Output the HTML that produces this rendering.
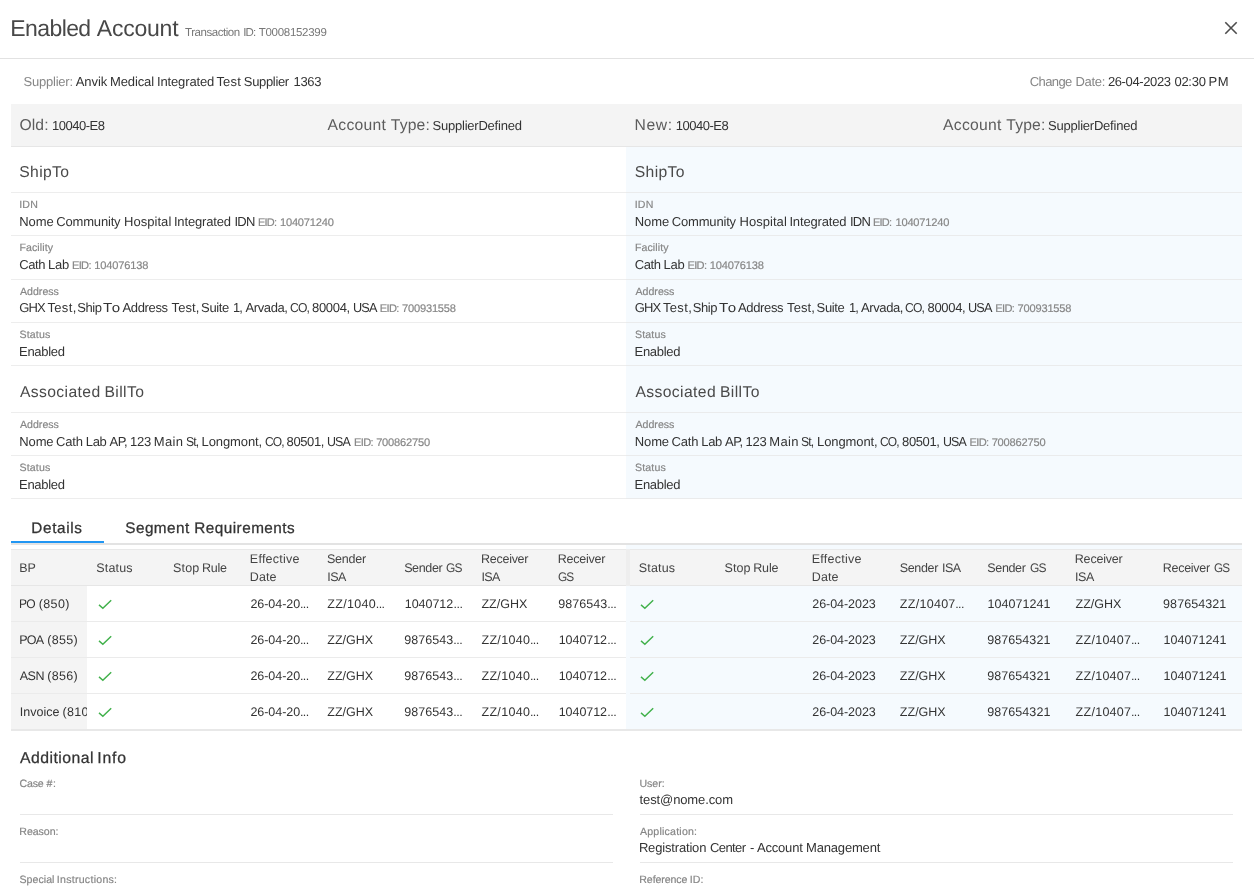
<!DOCTYPE html>
<html><head><meta charset="utf-8"><title>Enabled Account</title>
<style>
*{margin:0;padding:0;box-sizing:border-box}
html,body{width:1254px;height:890px;overflow:hidden;background:#fff}
body{font-family:"Liberation Sans",sans-serif;font-size:13px;color:#333;position:relative;text-rendering:geometricPrecision}
.a{position:absolute;white-space:nowrap;line-height:20px;height:20px}
.b{position:absolute}
#w{position:absolute;left:0;top:0;width:1254px;height:890px;will-change:transform}
</style></head>
<body>
<div id="w">
<div class="a" style="left:10.31px;top:18px;font-size:23px;color:#484848;letter-spacing:-0.59px;">Enabled</div>
<div class="a" style="left:96.83px;top:18px;font-size:23px;color:#484848;letter-spacing:-0.23px;">Account</div>
<div class="a" style="left:185.12px;top:23px;font-size:11.5px;color:#777;letter-spacing:-0.47px;">Transaction</div>
<div class="a" style="left:243.2px;top:23px;font-size:11.5px;color:#777;letter-spacing:-0.8px;">ID:</div>
<div class="a" style="left:258.72px;top:23px;font-size:11.5px;color:#777;letter-spacing:-0.29px;">T0008152399</div>
<svg class="b" style="left:1224px;top:21px" width="14" height="14" viewBox="0 0 14 14"><path d="M1.3 1.3 L12.7 12.7 M12.7 1.3 L1.3 12.7" stroke="#4d4d4d" stroke-width="1.6" fill="none"/></svg>
<div class="b" style="left:0px;top:58px;width:1254px;height:1px;background:#e2e2e2"></div>
<div class="a" style="left:23.6px;top:72px;font-size:13px;color:#868686;letter-spacing:-0.23px;">Supplier:</div>
<div class="a" style="left:75.72px;top:72px;font-size:13px;color:#333;letter-spacing:-0.04px;">Anvik</div>
<div class="a" style="left:110px;top:72px;font-size:13px;color:#333;letter-spacing:-0.12px;">Medical</div>
<div class="a" style="left:157px;top:72px;font-size:13px;color:#333;letter-spacing:-0.14px;">Integrated</div>
<div class="a" style="left:216.39px;top:72px;font-size:13px;color:#333;letter-spacing:0.19px;">Test</div>
<div class="a" style="left:243.8px;top:72px;font-size:13px;color:#333;letter-spacing:-0.33px;">Supplier</div>
<div class="a" style="left:293.5px;top:72px;font-size:13px;color:#333;letter-spacing:-0.35px;">1363</div>
<div class="a" style="left:1029.8px;top:72px;font-size:13px;color:#868686;letter-spacing:-0.6px;">Change</div>
<div class="a" style="left:1075.42px;top:72px;font-size:13px;color:#868686;letter-spacing:-0.26px;">Date:</div>
<div class="a" style="left:1107.93px;top:72px;font-size:13px;color:#333;letter-spacing:-0.38px;">26-04-2023</div>
<div class="a" style="left:1174.41px;top:72px;font-size:13px;color:#333;letter-spacing:-0.25px;">02:30</div>
<div class="a" style="left:1208.42px;top:72px;font-size:13px;color:#333;letter-spacing:0.77px;">PM</div>
<div class="b" style="left:11px;top:104px;width:1231px;height:43px;background:#f4f4f4;border-bottom:1px solid #e6e6e6"></div>
<div class="b" style="left:626px;top:147px;width:616px;height:352px;background:#f5fafe;"></div>
<div class="a" style="left:19.42px;top:116px;font-size:15.7px;color:#5c5c5c;letter-spacing:0.12px;">Old:</div>
<div class="a" style="left:52px;top:116px;font-size:13px;color:#333;letter-spacing:-0.5px;">10040-E8</div>
<div class="a" style="left:327.55px;top:116px;font-size:15.7px;color:#5c5c5c;letter-spacing:0.29px;">Account</div>
<div class="a" style="left:390.85px;top:116px;font-size:15.7px;color:#5c5c5c;letter-spacing:0.14px;">Type:</div>
<div class="a" style="left:432.6px;top:116px;font-size:13px;color:#333;letter-spacing:-0.23px;">SupplierDefined</div>
<div class="a" style="left:19.21px;top:163px;font-size:15.7px;color:#4a4a4a;letter-spacing:0.38px;">ShipTo</div>
<div class="a" style="left:19.22px;top:195px;font-size:10.6px;color:#868686;letter-spacing:0.18px;-webkit-text-stroke:0.18px #868686;">IDN</div>
<div class="a" style="left:19.2px;top:212px;font-size:13px;color:#333;letter-spacing:-0.03px;">Nome</div>
<div class="a" style="left:56.3px;top:212px;font-size:13px;color:#333;letter-spacing:-0.18px;">Community</div>
<div class="a" style="left:124.1px;top:212px;font-size:13px;color:#333;letter-spacing:0.03px;">Hospital</div>
<div class="a" style="left:173.9px;top:212px;font-size:13px;color:#333;letter-spacing:-0.15px;">Integrated</div>
<div class="a" style="left:234.4px;top:212px;font-size:13px;color:#333;letter-spacing:-0.71px;">IDN</div>
<div class="a" style="left:257.77px;top:213px;font-size:11.1px;color:#868686;letter-spacing:-0.78px;-webkit-text-stroke:0.18px #868686;transform:scaleX(0.987);transform-origin:0 0;">EID:</div>
<div class="a" style="left:279.96px;top:213px;font-size:11.1px;color:#868686;letter-spacing:-0.2px;-webkit-text-stroke:0.18px #868686;">104071240</div>
<div class="a" style="left:19.4px;top:238px;font-size:10.6px;color:#868686;letter-spacing:0.1px;-webkit-text-stroke:0.18px #868686;">Facility</div>
<div class="a" style="left:19.3px;top:255px;font-size:13px;color:#333;letter-spacing:-0.43px;">Cath</div>
<div class="a" style="left:48.02px;top:255px;font-size:13px;color:#333;letter-spacing:-0.24px;">Lab</div>
<div class="a" style="left:72.06px;top:256px;font-size:11.1px;color:#868686;letter-spacing:-0.72px;-webkit-text-stroke:0.18px #868686;">EID:</div>
<div class="a" style="left:94.26px;top:256px;font-size:11.1px;color:#868686;letter-spacing:-0.16px;-webkit-text-stroke:0.18px #868686;">104076138</div>
<div class="a" style="left:19.98px;top:282px;font-size:10.6px;color:#868686;letter-spacing:0.01px;-webkit-text-stroke:0.18px #868686;">Address</div>
<div class="a" style="left:19.3px;top:298px;font-size:13px;color:#333;letter-spacing:-0.84px;">GHX</div>
<div class="a" style="left:47.39px;top:298px;font-size:13px;color:#333;letter-spacing:0.36px;">Test,</div>
<div class="a" style="left:77.3px;top:298px;font-size:13px;color:#333;letter-spacing:-0.44px;">Ship</div>
<div class="a" style="left:103.44px;top:298px;font-size:13px;color:#333;letter-spacing:1.04px;transform:scaleX(1.160);transform-origin:0 0;">To</div>
<div class="a" style="left:122.52px;top:298px;font-size:13px;color:#333;letter-spacing:-0.35px;">Address</div>
<div class="a" style="left:171.59px;top:298px;font-size:13px;color:#333;letter-spacing:0.06px;">Test,</div>
<div class="a" style="left:201.1px;top:298px;font-size:13px;color:#333;letter-spacing:-0.37px;">Suite</div>
<div class="a" style="left:233.01px;top:298px;font-size:13px;color:#333;letter-spacing:-0.91px;transform:scaleX(0.989);transform-origin:0 0;">1,</div>
<div class="a" style="left:245.52px;top:298px;font-size:13px;color:#333;letter-spacing:-0.39px;">Arvada,</div>
<div class="a" style="left:289.95px;top:298px;font-size:13px;color:#333;letter-spacing:-0.91px;transform:scaleX(0.934);transform-origin:0 0;">CO,</div>
<div class="a" style="left:312.09px;top:298px;font-size:13px;color:#333;letter-spacing:-0.34px;">80004,</div>
<div class="a" style="left:352.62px;top:298px;font-size:13px;color:#333;letter-spacing:-0.91px;transform:scaleX(0.978);transform-origin:0 0;">USA</div>
<div class="a" style="left:379.66px;top:299px;font-size:11.1px;color:#868686;letter-spacing:-0.62px;-webkit-text-stroke:0.18px #868686;">EID:</div>
<div class="a" style="left:402.04px;top:299px;font-size:11.1px;color:#868686;letter-spacing:-0.2px;-webkit-text-stroke:0.18px #868686;">700931558</div>
<div class="a" style="left:19.52px;top:325px;font-size:10.6px;color:#868686;letter-spacing:0.15px;-webkit-text-stroke:0.18px #868686;">Status</div>
<div class="a" style="left:19.12px;top:342px;font-size:13px;color:#333;letter-spacing:-0.32px;">Enabled</div>
<div class="a" style="left:19.95px;top:383px;font-size:15.7px;color:#4a4a4a;letter-spacing:0.39px;">Associated</div>
<div class="a" style="left:104.4px;top:383px;font-size:15.7px;color:#4a4a4a;letter-spacing:0.43px;">BillTo</div>
<div class="a" style="left:19.98px;top:415px;font-size:10.6px;color:#868686;letter-spacing:0.01px;-webkit-text-stroke:0.18px #868686;">Address</div>
<div class="a" style="left:19.2px;top:432px;font-size:13px;color:#333;letter-spacing:-0.09px;">Nome</div>
<div class="a" style="left:56.1px;top:432px;font-size:13px;color:#333;letter-spacing:-0.23px;">Cath</div>
<div class="a" style="left:85.82px;top:432px;font-size:13px;color:#333;letter-spacing:-0.39px;">Lab</div>
<div class="a" style="left:109.62px;top:432px;font-size:13px;color:#333;letter-spacing:-0.65px;">AP,</div>
<div class="a" style="left:129.9px;top:432px;font-size:13px;color:#333;letter-spacing:-0.15px;">123</div>
<div class="a" style="left:153.8px;top:432px;font-size:13px;color:#333;letter-spacing:0.36px;">Main</div>
<div class="a" style="left:185.66px;top:432px;font-size:13px;color:#333;letter-spacing:-0.91px;transform:scaleX(0.936);transform-origin:0 0;">St,</div>
<div class="a" style="left:201.52px;top:432px;font-size:13px;color:#333;letter-spacing:-0.09px;">Longmont,</div>
<div class="a" style="left:264.76px;top:432px;font-size:13px;color:#333;letter-spacing:-0.91px;transform:scaleX(0.924);transform-origin:0 0;">CO,</div>
<div class="a" style="left:286.59px;top:432px;font-size:13px;color:#333;letter-spacing:-0.4px;">80501,</div>
<div class="a" style="left:327.44px;top:432px;font-size:13px;color:#333;letter-spacing:-0.91px;transform:scaleX(0.956);transform-origin:0 0;">USA</div>
<div class="a" style="left:354.06px;top:433px;font-size:11.1px;color:#868686;letter-spacing:-0.69px;-webkit-text-stroke:0.18px #868686;">EID:</div>
<div class="a" style="left:376.14px;top:433px;font-size:11.1px;color:#868686;letter-spacing:-0.19px;-webkit-text-stroke:0.18px #868686;">700862750</div>
<div class="a" style="left:19.52px;top:458px;font-size:10.6px;color:#868686;letter-spacing:0.15px;-webkit-text-stroke:0.18px #868686;">Status</div>
<div class="a" style="left:19.12px;top:475px;font-size:13px;color:#333;letter-spacing:-0.32px;">Enabled</div>
<div class="b" style="left:11px;top:192px;width:615px;height:1px;background:#ededed"></div>
<div class="b" style="left:11px;top:235px;width:615px;height:1px;background:#ededed"></div>
<div class="b" style="left:11px;top:279px;width:615px;height:1px;background:#ededed"></div>
<div class="b" style="left:11px;top:322px;width:615px;height:1px;background:#ededed"></div>
<div class="b" style="left:11px;top:365px;width:615px;height:1px;background:#ededed"></div>
<div class="b" style="left:11px;top:412px;width:615px;height:1px;background:#ededed"></div>
<div class="b" style="left:11px;top:455px;width:615px;height:1px;background:#ededed"></div>
<div class="b" style="left:11px;top:498px;width:615px;height:1px;background:#ededed"></div>
<div class="a" style="left:634.52px;top:116px;font-size:15.7px;color:#5c5c5c;letter-spacing:0.62px;">New:</div>
<div class="a" style="left:675.8px;top:116px;font-size:13px;color:#333;letter-spacing:-0.51px;">10040-E8</div>
<div class="a" style="left:943.05px;top:116px;font-size:15.7px;color:#5c5c5c;letter-spacing:0.29px;">Account</div>
<div class="a" style="left:1006.35px;top:116px;font-size:15.7px;color:#5c5c5c;letter-spacing:0.14px;">Type:</div>
<div class="a" style="left:1048.1px;top:116px;font-size:13px;color:#333;letter-spacing:-0.23px;">SupplierDefined</div>
<div class="a" style="left:634.71px;top:163px;font-size:15.7px;color:#4a4a4a;letter-spacing:0.38px;">ShipTo</div>
<div class="a" style="left:634.72px;top:195px;font-size:10.6px;color:#868686;letter-spacing:0.18px;-webkit-text-stroke:0.18px #868686;">IDN</div>
<div class="a" style="left:634.7px;top:212px;font-size:13px;color:#333;letter-spacing:-0.03px;">Nome</div>
<div class="a" style="left:671.8px;top:212px;font-size:13px;color:#333;letter-spacing:-0.18px;">Community</div>
<div class="a" style="left:739.6px;top:212px;font-size:13px;color:#333;letter-spacing:0.03px;">Hospital</div>
<div class="a" style="left:789.4px;top:212px;font-size:13px;color:#333;letter-spacing:-0.15px;">Integrated</div>
<div class="a" style="left:849.9px;top:212px;font-size:13px;color:#333;letter-spacing:-0.71px;">IDN</div>
<div class="a" style="left:873.27px;top:213px;font-size:11.1px;color:#868686;letter-spacing:-0.78px;-webkit-text-stroke:0.18px #868686;transform:scaleX(0.987);transform-origin:0 0;">EID:</div>
<div class="a" style="left:895.46px;top:213px;font-size:11.1px;color:#868686;letter-spacing:-0.2px;-webkit-text-stroke:0.18px #868686;">104071240</div>
<div class="a" style="left:634.9px;top:238px;font-size:10.6px;color:#868686;letter-spacing:0.1px;-webkit-text-stroke:0.18px #868686;">Facility</div>
<div class="a" style="left:634.8px;top:255px;font-size:13px;color:#333;letter-spacing:-0.43px;">Cath</div>
<div class="a" style="left:663.52px;top:255px;font-size:13px;color:#333;letter-spacing:-0.24px;">Lab</div>
<div class="a" style="left:687.56px;top:256px;font-size:11.1px;color:#868686;letter-spacing:-0.72px;-webkit-text-stroke:0.18px #868686;">EID:</div>
<div class="a" style="left:709.76px;top:256px;font-size:11.1px;color:#868686;letter-spacing:-0.16px;-webkit-text-stroke:0.18px #868686;">104076138</div>
<div class="a" style="left:635.48px;top:282px;font-size:10.6px;color:#868686;letter-spacing:0.01px;-webkit-text-stroke:0.18px #868686;">Address</div>
<div class="a" style="left:634.8px;top:298px;font-size:13px;color:#333;letter-spacing:-0.84px;">GHX</div>
<div class="a" style="left:662.89px;top:298px;font-size:13px;color:#333;letter-spacing:0.36px;">Test,</div>
<div class="a" style="left:692.8px;top:298px;font-size:13px;color:#333;letter-spacing:-0.44px;">Ship</div>
<div class="a" style="left:718.94px;top:298px;font-size:13px;color:#333;letter-spacing:1.04px;transform:scaleX(1.160);transform-origin:0 0;">To</div>
<div class="a" style="left:738.02px;top:298px;font-size:13px;color:#333;letter-spacing:-0.35px;">Address</div>
<div class="a" style="left:787.09px;top:298px;font-size:13px;color:#333;letter-spacing:0.06px;">Test,</div>
<div class="a" style="left:816.6px;top:298px;font-size:13px;color:#333;letter-spacing:-0.37px;">Suite</div>
<div class="a" style="left:848.51px;top:298px;font-size:13px;color:#333;letter-spacing:-0.91px;transform:scaleX(0.989);transform-origin:0 0;">1,</div>
<div class="a" style="left:861.02px;top:298px;font-size:13px;color:#333;letter-spacing:-0.39px;">Arvada,</div>
<div class="a" style="left:905.45px;top:298px;font-size:13px;color:#333;letter-spacing:-0.91px;transform:scaleX(0.934);transform-origin:0 0;">CO,</div>
<div class="a" style="left:927.59px;top:298px;font-size:13px;color:#333;letter-spacing:-0.34px;">80004,</div>
<div class="a" style="left:968.12px;top:298px;font-size:13px;color:#333;letter-spacing:-0.91px;transform:scaleX(0.978);transform-origin:0 0;">USA</div>
<div class="a" style="left:995.16px;top:299px;font-size:11.1px;color:#868686;letter-spacing:-0.62px;-webkit-text-stroke:0.18px #868686;">EID:</div>
<div class="a" style="left:1017.54px;top:299px;font-size:11.1px;color:#868686;letter-spacing:-0.2px;-webkit-text-stroke:0.18px #868686;">700931558</div>
<div class="a" style="left:635.02px;top:325px;font-size:10.6px;color:#868686;letter-spacing:0.15px;-webkit-text-stroke:0.18px #868686;">Status</div>
<div class="a" style="left:634.62px;top:342px;font-size:13px;color:#333;letter-spacing:-0.32px;">Enabled</div>
<div class="a" style="left:635.45px;top:383px;font-size:15.7px;color:#4a4a4a;letter-spacing:0.39px;">Associated</div>
<div class="a" style="left:719.9px;top:383px;font-size:15.7px;color:#4a4a4a;letter-spacing:0.43px;">BillTo</div>
<div class="a" style="left:635.48px;top:415px;font-size:10.6px;color:#868686;letter-spacing:0.01px;-webkit-text-stroke:0.18px #868686;">Address</div>
<div class="a" style="left:634.7px;top:432px;font-size:13px;color:#333;letter-spacing:-0.09px;">Nome</div>
<div class="a" style="left:671.6px;top:432px;font-size:13px;color:#333;letter-spacing:-0.23px;">Cath</div>
<div class="a" style="left:701.32px;top:432px;font-size:13px;color:#333;letter-spacing:-0.39px;">Lab</div>
<div class="a" style="left:725.12px;top:432px;font-size:13px;color:#333;letter-spacing:-0.65px;">AP,</div>
<div class="a" style="left:745.4px;top:432px;font-size:13px;color:#333;letter-spacing:-0.15px;">123</div>
<div class="a" style="left:769.3px;top:432px;font-size:13px;color:#333;letter-spacing:0.36px;">Main</div>
<div class="a" style="left:801.16px;top:432px;font-size:13px;color:#333;letter-spacing:-0.91px;transform:scaleX(0.936);transform-origin:0 0;">St,</div>
<div class="a" style="left:817.02px;top:432px;font-size:13px;color:#333;letter-spacing:-0.09px;">Longmont,</div>
<div class="a" style="left:880.26px;top:432px;font-size:13px;color:#333;letter-spacing:-0.91px;transform:scaleX(0.924);transform-origin:0 0;">CO,</div>
<div class="a" style="left:902.09px;top:432px;font-size:13px;color:#333;letter-spacing:-0.4px;">80501,</div>
<div class="a" style="left:942.94px;top:432px;font-size:13px;color:#333;letter-spacing:-0.91px;transform:scaleX(0.956);transform-origin:0 0;">USA</div>
<div class="a" style="left:969.56px;top:433px;font-size:11.1px;color:#868686;letter-spacing:-0.69px;-webkit-text-stroke:0.18px #868686;">EID:</div>
<div class="a" style="left:991.64px;top:433px;font-size:11.1px;color:#868686;letter-spacing:-0.19px;-webkit-text-stroke:0.18px #868686;">700862750</div>
<div class="a" style="left:635.02px;top:458px;font-size:10.6px;color:#868686;letter-spacing:0.15px;-webkit-text-stroke:0.18px #868686;">Status</div>
<div class="a" style="left:634.62px;top:475px;font-size:13px;color:#333;letter-spacing:-0.32px;">Enabled</div>
<div class="b" style="left:626px;top:192px;width:616px;height:1px;background:#eaebec"></div>
<div class="b" style="left:626px;top:235px;width:616px;height:1px;background:#eaebec"></div>
<div class="b" style="left:626px;top:279px;width:616px;height:1px;background:#eaebec"></div>
<div class="b" style="left:626px;top:322px;width:616px;height:1px;background:#eaebec"></div>
<div class="b" style="left:626px;top:365px;width:616px;height:1px;background:#eaebec"></div>
<div class="b" style="left:626px;top:412px;width:616px;height:1px;background:#eaebec"></div>
<div class="b" style="left:626px;top:455px;width:616px;height:1px;background:#eaebec"></div>
<div class="b" style="left:626px;top:498px;width:616px;height:1px;background:#eaebec"></div>
<div class="a" style="left:31.34px;top:519px;font-size:15.3px;color:#333;letter-spacing:0.64px;-webkit-text-stroke:0.28px #333;">Details</div>
<div class="a" style="left:125.3px;top:519px;font-size:15.3px;color:#333;letter-spacing:0.44px;-webkit-text-stroke:0.28px #333;">Segment</div>
<div class="a" style="left:194.21px;top:519px;font-size:15.3px;color:#333;letter-spacing:0.48px;-webkit-text-stroke:0.28px #333;">Requirements</div>
<div class="b" style="left:11px;top:543px;width:1231px;height:2px;background:#e3e3e3"></div>
<div class="b" style="left:11px;top:541px;width:93px;height:2px;background:#2196f3"></div>
<div class="b" style="left:626px;top:545px;width:616px;height:184px;background:#f5fafe;"></div>
<div class="b" style="left:11px;top:549px;width:615px;height:37px;background:#f4f4f4;border-top:1px solid #e9e9e9;border-bottom:1px solid #e6e6e6"></div>
<div class="b" style="left:626px;top:549px;width:4px;height:37px;background:#eeeeee;"></div>
<div class="b" style="left:630px;top:549px;width:612px;height:37px;background:#f4f4f4;border-top:1px solid #e9e9e9;border-bottom:1px solid #e6e6e6"></div>
<div class="b" style="left:11px;top:586px;width:76px;height:143px;background:#f4f4f4;"></div>
<div class="b" style="left:11px;top:621px;width:615px;height:1px;background:#ebebeb"></div>
<div class="b" style="left:630px;top:621px;width:612px;height:1px;background:#ebebeb"></div>
<div class="b" style="left:11px;top:657px;width:615px;height:1px;background:#ebebeb"></div>
<div class="b" style="left:630px;top:657px;width:612px;height:1px;background:#ebebeb"></div>
<div class="b" style="left:11px;top:693px;width:615px;height:1px;background:#ebebeb"></div>
<div class="b" style="left:630px;top:693px;width:612px;height:1px;background:#ebebeb"></div>
<div class="b" style="left:11px;top:729px;width:1231px;height:2px;background:#e8e8e8"></div>
<div class="a" style="left:19.16px;top:558px;font-size:12.5px;color:#444;letter-spacing:-0.07px;">BP</div>
<div class="a" style="left:96.34px;top:558px;font-size:12.5px;color:#444;letter-spacing:0.17px;">Status</div>
<div class="a" style="left:173.04px;top:558px;font-size:12.5px;color:#444;letter-spacing:0.17px;">Stop</div>
<div class="a" style="left:202.1px;top:558px;font-size:12.5px;color:#444;letter-spacing:-0.27px;">Rule</div>
<div class="a" style="left:249.86px;top:549px;font-size:12.5px;color:#444;letter-spacing:0.23px;">Effective</div>
<div class="a" style="left:249.86px;top:567px;font-size:12.5px;color:#444;letter-spacing:0.1px;">Date</div>
<div class="a" style="left:326.94px;top:549px;font-size:12.5px;color:#444;letter-spacing:-0.23px;">Sender</div>
<div class="a" style="left:327.2px;top:567px;font-size:12.5px;color:#444;letter-spacing:-0.48px;">ISA</div>
<div class="a" style="left:404.14px;top:558px;font-size:12.5px;color:#444;letter-spacing:-0.35px;">Sender</div>
<div class="a" style="left:446.46px;top:558px;font-size:12.5px;color:#444;letter-spacing:-0.88px;transform:scaleX(0.953);transform-origin:0 0;">GS</div>
<div class="a" style="left:481.1px;top:549px;font-size:12.5px;color:#444;letter-spacing:-0.28px;">Receiver</div>
<div class="a" style="left:481.5px;top:567px;font-size:12.5px;color:#444;letter-spacing:-0.68px;">ISA</div>
<div class="a" style="left:557.8px;top:549px;font-size:12.5px;color:#444;letter-spacing:-0.25px;">Receiver</div>
<div class="a" style="left:558.46px;top:567px;font-size:12.5px;color:#444;letter-spacing:-0.88px;transform:scaleX(0.947);transform-origin:0 0;">GS</div>
<div class="a" style="left:638.84px;top:558px;font-size:12.5px;color:#444;letter-spacing:0.17px;">Status</div>
<div class="a" style="left:724.54px;top:558px;font-size:12.5px;color:#444;letter-spacing:0.04px;">Stop</div>
<div class="a" style="left:753.2px;top:558px;font-size:12.5px;color:#444;letter-spacing:-0.13px;">Rule</div>
<div class="a" style="left:811.76px;top:549px;font-size:12.5px;color:#444;letter-spacing:0.26px;">Effective</div>
<div class="a" style="left:811.76px;top:567px;font-size:12.5px;color:#444;letter-spacing:0.1px;">Date</div>
<div class="a" style="left:899.74px;top:558px;font-size:12.5px;color:#444;letter-spacing:-0.35px;">Sender</div>
<div class="a" style="left:942px;top:558px;font-size:12.5px;color:#444;letter-spacing:-0.48px;">ISA</div>
<div class="a" style="left:987.34px;top:558px;font-size:12.5px;color:#444;letter-spacing:-0.35px;">Sender</div>
<div class="a" style="left:1030.05px;top:558px;font-size:12.5px;color:#444;letter-spacing:-0.88px;transform:scaleX(0.959);transform-origin:0 0;">GS</div>
<div class="a" style="left:1074.8px;top:549px;font-size:12.5px;color:#444;letter-spacing:-0.2px;">Receiver</div>
<div class="a" style="left:1075.1px;top:567px;font-size:12.5px;color:#444;letter-spacing:-0.48px;">ISA</div>
<div class="a" style="left:1162.8px;top:558px;font-size:12.5px;color:#444;letter-spacing:-0.29px;">Receiver</div>
<div class="a" style="left:1214.07px;top:558px;font-size:12.5px;color:#444;letter-spacing:-0.88px;transform:scaleX(0.934);transform-origin:0 0;">GS</div>
<div class="a" style="left:19.34px;top:594px;font-size:12.5px;color:#333;letter-spacing:-0.88px;transform:scaleX(0.963);transform-origin:0 0;">PO</div>
<div class="a" style="left:38.79px;top:594px;font-size:12.5px;color:#333;letter-spacing:0.36px;">(850)</div>
<svg class="b" style="left:98px;top:599.4px" width="15" height="12" viewBox="0 0 15 12"><path d="M1.0 5.9 L4.85 9.2 L13.2 1.2" stroke="#41b14b" stroke-width="1.45" fill="none"/></svg>
<svg class="b" style="left:640.4px;top:599.4px" width="15" height="12" viewBox="0 0 15 12"><path d="M1.0 5.9 L4.85 9.2 L13.2 1.2" stroke="#41b14b" stroke-width="1.45" fill="none"/></svg>
<div class="a" style="left:250.46px;top:594px;font-size:12.5px;color:#333;letter-spacing:-0.05px;">26-04-20</div>
<div class="a" style="left:299.9px;top:594px;font-size:12.5px;color:#333;letter-spacing:-0.59px;">...</div>
<div class="a" style="left:327.27px;top:594px;font-size:12.5px;color:#333;letter-spacing:0.31px;">ZZ/1040</div>
<div class="a" style="left:375.8px;top:594px;font-size:12.5px;color:#333;letter-spacing:-0.64px;">...</div>
<div class="a" style="left:404.8px;top:594px;font-size:12.5px;color:#333;letter-spacing:-0.05px;">1040712</div>
<div class="a" style="left:453.4px;top:594px;font-size:12.5px;color:#333;letter-spacing:-0.44px;">...</div>
<div class="a" style="left:481.47px;top:594px;font-size:12.5px;color:#333;">ZZ/GHX</div>
<div class="a" style="left:558.17px;top:594px;font-size:12.5px;color:#333;letter-spacing:0.05px;">9876543</div>
<div class="a" style="left:607.2px;top:594px;font-size:12.5px;color:#333;letter-spacing:-0.49px;">...</div>
<div class="a" style="left:812.26px;top:594px;font-size:12.5px;color:#333;letter-spacing:-0.05px;">26-04-2023</div>
<div class="a" style="left:899.87px;top:594px;font-size:12.5px;color:#333;letter-spacing:0.28px;">ZZ/10407</div>
<div class="a" style="left:955.2px;top:594px;font-size:12.5px;color:#333;letter-spacing:-0.59px;">...</div>
<div class="a" style="left:987.5px;top:594px;font-size:12.5px;color:#333;letter-spacing:0.06px;">104071241</div>
<div class="a" style="left:1075.57px;top:594px;font-size:12.5px;color:#333;">ZZ/GHX</div>
<div class="a" style="left:1163.07px;top:594px;font-size:12.5px;color:#333;letter-spacing:0.08px;">987654321</div>
<div class="a" style="left:19.3px;top:630px;font-size:12.5px;color:#333;letter-spacing:-0.8px;">POA</div>
<div class="a" style="left:47.19px;top:630px;font-size:12.5px;color:#333;letter-spacing:0.31px;">(855)</div>
<svg class="b" style="left:98px;top:635.4px" width="15" height="12" viewBox="0 0 15 12"><path d="M1.0 5.9 L4.85 9.2 L13.2 1.2" stroke="#41b14b" stroke-width="1.45" fill="none"/></svg>
<svg class="b" style="left:640.4px;top:635.4px" width="15" height="12" viewBox="0 0 15 12"><path d="M1.0 5.9 L4.85 9.2 L13.2 1.2" stroke="#41b14b" stroke-width="1.45" fill="none"/></svg>
<div class="a" style="left:250.46px;top:630px;font-size:12.5px;color:#333;letter-spacing:-0.05px;">26-04-20</div>
<div class="a" style="left:299.9px;top:630px;font-size:12.5px;color:#333;letter-spacing:-0.59px;">...</div>
<div class="a" style="left:327.27px;top:630px;font-size:12.5px;color:#333;">ZZ/GHX</div>
<div class="a" style="left:404.27px;top:630px;font-size:12.5px;color:#333;letter-spacing:0.05px;">9876543</div>
<div class="a" style="left:453.3px;top:630px;font-size:12.5px;color:#333;letter-spacing:-0.49px;">...</div>
<div class="a" style="left:481.47px;top:630px;font-size:12.5px;color:#333;letter-spacing:0.31px;">ZZ/1040</div>
<div class="a" style="left:530px;top:630px;font-size:12.5px;color:#333;letter-spacing:-0.64px;">...</div>
<div class="a" style="left:558.7px;top:630px;font-size:12.5px;color:#333;letter-spacing:-0.05px;">1040712</div>
<div class="a" style="left:607.3px;top:630px;font-size:12.5px;color:#333;letter-spacing:-0.44px;">...</div>
<div class="a" style="left:812.26px;top:630px;font-size:12.5px;color:#333;letter-spacing:-0.05px;">26-04-2023</div>
<div class="a" style="left:899.87px;top:630px;font-size:12.5px;color:#333;">ZZ/GHX</div>
<div class="a" style="left:987.17px;top:630px;font-size:12.5px;color:#333;letter-spacing:0.08px;">987654321</div>
<div class="a" style="left:1075.57px;top:630px;font-size:12.5px;color:#333;letter-spacing:0.28px;">ZZ/10407</div>
<div class="a" style="left:1130.9px;top:630px;font-size:12.5px;color:#333;letter-spacing:-0.59px;">...</div>
<div class="a" style="left:1163.4px;top:630px;font-size:12.5px;color:#333;letter-spacing:0.06px;">104071241</div>
<div class="a" style="left:19.72px;top:666px;font-size:12.5px;color:#333;letter-spacing:-0.48px;">ASN</div>
<div class="a" style="left:47.19px;top:666px;font-size:12.5px;color:#333;letter-spacing:0.31px;">(856)</div>
<svg class="b" style="left:98px;top:671.4px" width="15" height="12" viewBox="0 0 15 12"><path d="M1.0 5.9 L4.85 9.2 L13.2 1.2" stroke="#41b14b" stroke-width="1.45" fill="none"/></svg>
<svg class="b" style="left:640.4px;top:671.4px" width="15" height="12" viewBox="0 0 15 12"><path d="M1.0 5.9 L4.85 9.2 L13.2 1.2" stroke="#41b14b" stroke-width="1.45" fill="none"/></svg>
<div class="a" style="left:250.46px;top:666px;font-size:12.5px;color:#333;letter-spacing:-0.05px;">26-04-20</div>
<div class="a" style="left:299.9px;top:666px;font-size:12.5px;color:#333;letter-spacing:-0.59px;">...</div>
<div class="a" style="left:327.27px;top:666px;font-size:12.5px;color:#333;">ZZ/GHX</div>
<div class="a" style="left:404.27px;top:666px;font-size:12.5px;color:#333;letter-spacing:0.05px;">9876543</div>
<div class="a" style="left:453.3px;top:666px;font-size:12.5px;color:#333;letter-spacing:-0.49px;">...</div>
<div class="a" style="left:481.47px;top:666px;font-size:12.5px;color:#333;letter-spacing:0.31px;">ZZ/1040</div>
<div class="a" style="left:530px;top:666px;font-size:12.5px;color:#333;letter-spacing:-0.64px;">...</div>
<div class="a" style="left:558.7px;top:666px;font-size:12.5px;color:#333;letter-spacing:-0.05px;">1040712</div>
<div class="a" style="left:607.3px;top:666px;font-size:12.5px;color:#333;letter-spacing:-0.44px;">...</div>
<div class="a" style="left:812.26px;top:666px;font-size:12.5px;color:#333;letter-spacing:-0.05px;">26-04-2023</div>
<div class="a" style="left:899.87px;top:666px;font-size:12.5px;color:#333;">ZZ/GHX</div>
<div class="a" style="left:987.17px;top:666px;font-size:12.5px;color:#333;letter-spacing:0.08px;">987654321</div>
<div class="a" style="left:1075.57px;top:666px;font-size:12.5px;color:#333;letter-spacing:0.28px;">ZZ/10407</div>
<div class="a" style="left:1130.9px;top:666px;font-size:12.5px;color:#333;letter-spacing:-0.59px;">...</div>
<div class="a" style="left:1163.4px;top:666px;font-size:12.5px;color:#333;letter-spacing:0.06px;">104071241</div>
<div class="a" style="left:19.7px;top:702px;font-size:12.5px;color:#333;letter-spacing:0.02px;">Invoice</div>
<div class="a" style="left:62.39px;top:702px;font-size:12.5px;color:#333;letter-spacing:0.34px;width:24.51px;overflow:hidden;">(810)</div>
<svg class="b" style="left:98px;top:707.4px" width="15" height="12" viewBox="0 0 15 12"><path d="M1.0 5.9 L4.85 9.2 L13.2 1.2" stroke="#41b14b" stroke-width="1.45" fill="none"/></svg>
<svg class="b" style="left:640.4px;top:707.4px" width="15" height="12" viewBox="0 0 15 12"><path d="M1.0 5.9 L4.85 9.2 L13.2 1.2" stroke="#41b14b" stroke-width="1.45" fill="none"/></svg>
<div class="a" style="left:250.46px;top:702px;font-size:12.5px;color:#333;letter-spacing:-0.05px;">26-04-20</div>
<div class="a" style="left:299.9px;top:702px;font-size:12.5px;color:#333;letter-spacing:-0.59px;">...</div>
<div class="a" style="left:327.27px;top:702px;font-size:12.5px;color:#333;">ZZ/GHX</div>
<div class="a" style="left:404.27px;top:702px;font-size:12.5px;color:#333;letter-spacing:0.05px;">9876543</div>
<div class="a" style="left:453.3px;top:702px;font-size:12.5px;color:#333;letter-spacing:-0.49px;">...</div>
<div class="a" style="left:481.47px;top:702px;font-size:12.5px;color:#333;letter-spacing:0.31px;">ZZ/1040</div>
<div class="a" style="left:530px;top:702px;font-size:12.5px;color:#333;letter-spacing:-0.64px;">...</div>
<div class="a" style="left:558.7px;top:702px;font-size:12.5px;color:#333;letter-spacing:-0.05px;">1040712</div>
<div class="a" style="left:607.3px;top:702px;font-size:12.5px;color:#333;letter-spacing:-0.44px;">...</div>
<div class="a" style="left:812.26px;top:702px;font-size:12.5px;color:#333;letter-spacing:-0.05px;">26-04-2023</div>
<div class="a" style="left:899.87px;top:702px;font-size:12.5px;color:#333;">ZZ/GHX</div>
<div class="a" style="left:987.17px;top:702px;font-size:12.5px;color:#333;letter-spacing:0.08px;">987654321</div>
<div class="a" style="left:1075.57px;top:702px;font-size:12.5px;color:#333;letter-spacing:0.28px;">ZZ/10407</div>
<div class="a" style="left:1130.9px;top:702px;font-size:12.5px;color:#333;letter-spacing:-0.59px;">...</div>
<div class="a" style="left:1163.4px;top:702px;font-size:12.5px;color:#333;letter-spacing:0.06px;">104071241</div>
<div class="a" style="left:19.9px;top:749px;font-size:15.8px;color:#333;letter-spacing:0.47px;-webkit-text-stroke:0.25px #333;">Additional</div>
<div class="a" style="left:97.2px;top:749px;font-size:15.8px;color:#333;letter-spacing:0.81px;-webkit-text-stroke:0.25px #333;">Info</div>
<div class="a" style="left:19.56px;top:774px;font-size:10.6px;color:#868686;letter-spacing:-0.22px;-webkit-text-stroke:0.18px #868686;">Case</div>
<div class="a" style="left:46.53px;top:774px;font-size:10.6px;color:#868686;letter-spacing:0.62px;-webkit-text-stroke:0.18px #868686;">#:</div>
<div class="a" style="left:639.38px;top:774px;font-size:10.6px;color:#868686;letter-spacing:-0.01px;-webkit-text-stroke:0.18px #868686;">User:</div>
<div class="a" style="left:639.58px;top:790px;font-size:13px;color:#333;letter-spacing:-0.12px;">test@nome.com</div>
<div class="b" style="left:20px;top:814px;width:593px;height:1px;background:#e8e8e8"></div>
<div class="b" style="left:640px;top:814px;width:593px;height:1px;background:#e8e8e8"></div>
<div class="a" style="left:19.3px;top:822px;font-size:10.6px;color:#868686;letter-spacing:-0.05px;-webkit-text-stroke:0.18px #868686;">Reason:</div>
<div class="a" style="left:639.88px;top:822px;font-size:10.6px;color:#868686;letter-spacing:0.22px;-webkit-text-stroke:0.18px #868686;">Application:</div>
<div class="a" style="left:638.92px;top:838px;font-size:13px;color:#333;letter-spacing:-0.17px;">Registration</div>
<div class="a" style="left:710.1px;top:838px;font-size:13px;color:#333;letter-spacing:-0.62px;">Center</div>
<div class="a" style="left:750.04px;top:838px;font-size:13px;color:#333;">-</div>
<div class="a" style="left:756.92px;top:838px;font-size:13px;color:#333;letter-spacing:-0.18px;">Account</div>
<div class="a" style="left:806px;top:838px;font-size:13px;color:#333;letter-spacing:-0.17px;">Management</div>
<div class="b" style="left:20px;top:862px;width:593px;height:1px;background:#e8e8e8"></div>
<div class="b" style="left:640px;top:862px;width:593px;height:1px;background:#e8e8e8"></div>
<div class="a" style="left:19.42px;top:870px;font-size:10.6px;color:#868686;letter-spacing:0.05px;-webkit-text-stroke:0.18px #868686;">Special</div>
<div class="a" style="left:56.82px;top:870px;font-size:10.6px;color:#868686;letter-spacing:0.26px;-webkit-text-stroke:0.18px #868686;">Instructions:</div>
<div class="a" style="left:639.3px;top:870px;font-size:10.6px;color:#868686;letter-spacing:-0.1px;-webkit-text-stroke:0.18px #868686;">Reference</div>
<div class="a" style="left:689.82px;top:870px;font-size:10.6px;color:#868686;letter-spacing:0.08px;-webkit-text-stroke:0.18px #868686;">ID:</div>
</div>
</body></html>
